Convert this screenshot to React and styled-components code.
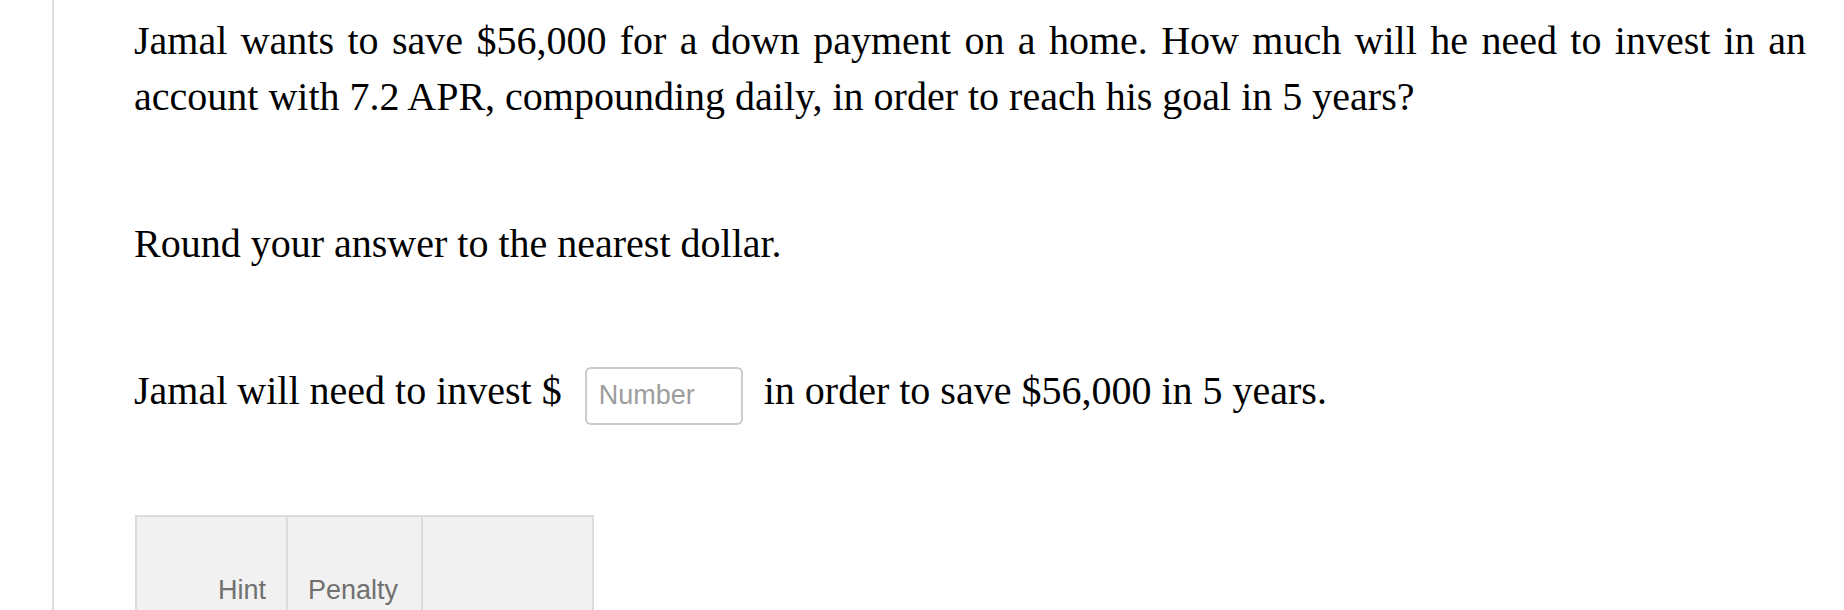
import React from "react";
import styled, { createGlobalStyle } from "styled-components";

const Global = createGlobalStyle`
  html, body { margin: 0; padding: 0; background: #fff; }
  body { font-family: "Liberation Serif", "Times New Roman", serif; color: #000; }
`;

const Page = styled.div`
  margin-left: 52px;
  border-left: 2px solid #dddddd;
  min-height: 100vh;
  padding: 13px 38px 0 80px;
  box-sizing: border-box;
  display: flex;
  flex-direction: column;
  gap: 91px;
`;

const Para = styled.p`
  margin: 0;
  font-size: 40px;
  line-height: 56px;
  text-align: ${(p) => (p.$justify ? "justify" : "left")};
`;

const Field = styled.input`
  box-sizing: border-box;
  width: 158px;
  height: 58px;
  margin: 0 21px 0 23px;
  padding: 11px 12px;
  border: 2px solid #cccccc;
  border-radius: 6px;
  font-family: "Liberation Sans", Arial, sans-serif;
  font-size: 27px;
  color: #333;
  background: #fff;
  vertical-align: baseline;
  outline: none;
  &::placeholder { color: #9d9d9d; }
`;

const HintTable = styled.table`
  border-collapse: collapse;
  border: 2px solid #dcdcdc;
  background: #f1f1f1;
  align-self: flex-start;
  margin-left: 1px;
  margin-top: -1px;
`;

const HeadCell = styled.th`
  border: 2px solid #dcdcdc;
  padding: 58px 20px 12px;
  font-family: "Liberation Sans", Arial, sans-serif;
  font-size: 27px;
  font-weight: normal;
  line-height: 31px;
  color: #707070;
  vertical-align: bottom;
  text-align: ${(p) => p.$align || "left"};
  width: ${(p) => p.$w}px;
`;

export default function App() {
  return (
    <>
      <Global />
      <Page>
        <Para $justify>
          Jamal wants to save $56,000 for a down payment on a home. How much
          will he need to invest in an account with 7.2 APR, compounding daily,
          in order to reach his goal in 5 years?
        </Para>
        <Para>Round your answer to the nearest dollar.</Para>
        <Para>
          Jamal will need to invest $
          <Field type="text" placeholder="Number" aria-label="Number" />
          in order to save $56,000 in 5 years.
        </Para>
        <HintTable>
          <thead>
            <tr>
              <HeadCell $align="right" $w={109}>Hint</HeadCell>
              <HeadCell $w={93}>Penalty</HeadCell>
              <HeadCell $w={129}></HeadCell>
            </tr>
          </thead>
        </HintTable>
      </Page>
    </>
  );
}
